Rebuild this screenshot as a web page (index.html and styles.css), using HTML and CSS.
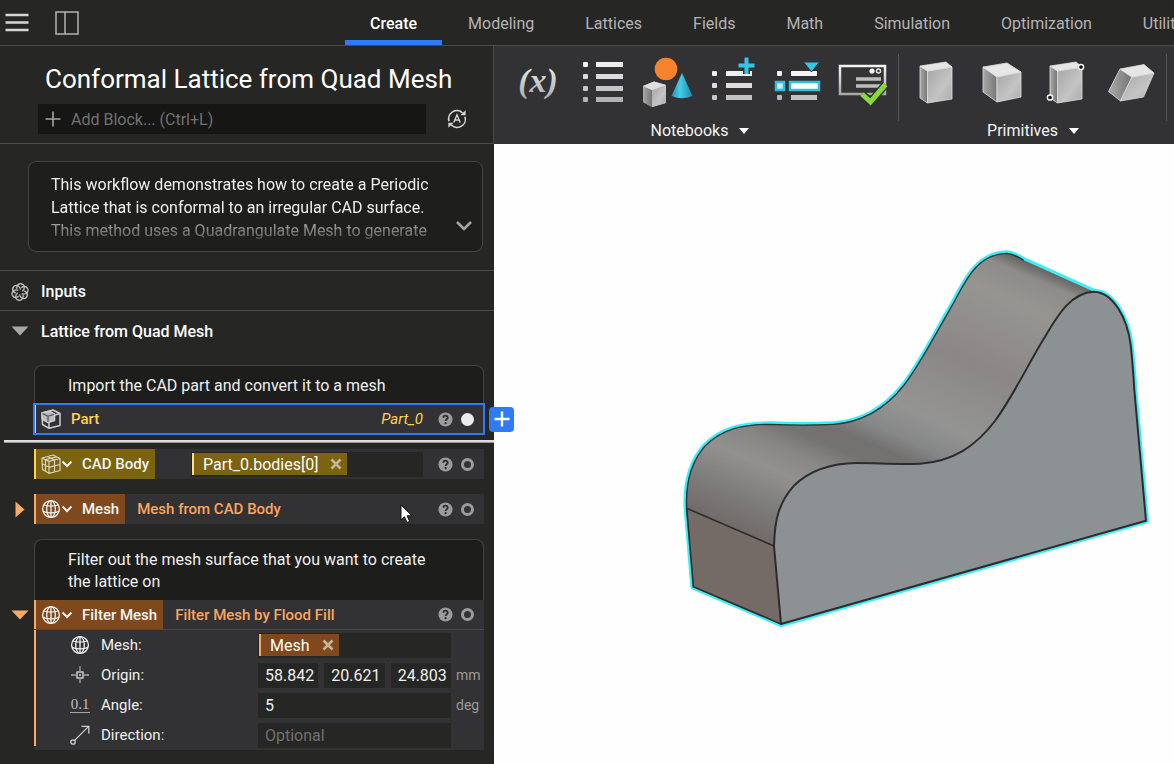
FILE: index.html
```html
<!DOCTYPE html>
<html lang="en">
<head>
    <meta charset="UTF-8">
    <meta name="viewport" content="width=device-width, initial-scale=1.0">
    <title>Conformal Lattice from Quad Mesh</title>
    <link rel="stylesheet" href="styles.css">
</head>
<body>
    <!-- shared icons and gradients -->
    <svg class="defs" width="0" height="0" aria-hidden="true">
        <defs>
            <linearGradient id="silver" x1="0" y1="0" x2="0" y2="1">
                <stop offset="0" stop-color="#f4f4f4"/>
                <stop offset="1" stop-color="#a8a8a8"/>
            </linearGradient>
            <linearGradient id="face" x1="0" y1="0" x2="1" y2="1">
                <stop offset="0" stop-color="#a6a6a6"/>
                <stop offset="0.6" stop-color="#c4c4c4"/>
                <stop offset="1" stop-color="#ababab"/>
            </linearGradient>
            <linearGradient id="side" x1="0" y1="0" x2="1" y2="0">
                <stop offset="0" stop-color="#a9a9a9"/>
                <stop offset="1" stop-color="#757575"/>
            </linearGradient>
            <linearGradient id="cone" x1="0" y1="0" x2="1" y2="0">
                <stop offset="0" stop-color="#1d93b4"/>
                <stop offset="0.4" stop-color="#43cfe8"/>
                <stop offset="1" stop-color="#1b87a5"/>
            </linearGradient>
        </defs>
        <symbol id="i-globe" viewBox="0 0 20 20">
            <g fill="none" stroke="currentColor" stroke-width="1.3">
                <circle cx="10" cy="10" r="8.4"/>
                <ellipse cx="10" cy="10" rx="4.3" ry="8.4"/>
                <path d="M10 1.6V18.4M2.8 6Q10 8.2 17.2 6M2 12.3Q10 15.6 18 12.3"/>
            </g>
        </symbol>
        <symbol id="i-chevron" viewBox="0 0 12 12">
            <path d="M1.500 3.500L6 8L10.500 3.500" fill="none" stroke="currentColor" stroke-width="2"/>
        </symbol>
        <symbol id="i-help" viewBox="0 0 16 16">
            <circle cx="8" cy="8" r="7.5" fill="#9b9b9b"/>
            <path d="M5.7 6.2C5.7 3.2 10.4 3.3 10.4 6C10.4 7.7 8.1 7.6 8.1 9.5" fill="none" stroke="#2b2b2c" stroke-width="1.9"/>
            <circle cx="8.1" cy="11.9" r="1.2" fill="#2b2b2c"/>
        </symbol>
        <symbol id="i-x" viewBox="0 0 12 12">
            <path d="M1.500 1.500L10.500 10.500M10.500 1.500L1.500 10.500" stroke="#c5b69a" stroke-width="2.6"/>
        </symbol>
    </svg>

    <header class="topbar">
        <button class="icon-btn" aria-label="Menu">
            <svg width="24" height="24" viewBox="0 0 24 24"><path d="M.5 4H23.5M.5 11.5H23.5M.5 19H23.5" stroke="#d6d6d6" stroke-width="2.4"/></svg>
        </button>
        <button class="icon-btn" aria-label="Toggle panel">
            <svg width="24" height="24" viewBox="0 0 24 24"><path d="M1 1H23V23H1ZM10 1V23" fill="none" stroke="#b4b4b4" stroke-width="1.5"/></svg>
        </button>
        <nav class="tabs">
            <a class="active" href="#create">Create</a>
            <a href="#modeling">Modeling</a>
            <a href="#lattices">Lattices</a>
            <a href="#fields">Fields</a>
            <a href="#math">Math</a>
            <a href="#simulation">Simulation</a>
            <a href="#optimization">Optimization</a>
            <a href="#utilities">Utilities</a>
        </nav>
    </header>

    <div class="workspace">
        <aside class="notebook">
            <div class="notebook-head">
                <h1>Conformal Lattice from Quad Mesh</h1>
                <div class="add-row">
                    <div class="add-block">
                        <svg width="16" height="16" viewBox="0 0 16 16"><path d="M8 .5V15.5M.5 8H15.5" stroke="#a5a5a5" stroke-width="1.6"/></svg>
                        <input type="text" aria-label="Add block" placeholder="Add Block... (Ctrl+L)">
                    </div>
                    <button class="icon-btn" aria-label="Auto rebuild">
                        <svg width="20" height="20" viewBox="0 0 20 20" fill="none" stroke="#d8d8d8" stroke-width="1.6">
                            <path d="M2 12.3A8.2 8.2 0 0 1 15.6 4M18 7.7A8.2 8.2 0 0 1 4.4 16"/>
                            <path d="M6.8 13.6L10 5.8L13.2 13.6M7.9 11H12.1" stroke-width="1.4"/>
                            <path d="M18.6 1.2V6.2H13.4ZM1.4 18.8V13.8H6.6Z" fill="#d8d8d8" stroke="none"/>
                        </svg>
                    </button>
                </div>
            </div>

            <div class="about">
                <p>This workflow demonstrates how to create a Periodic Lattice that is conformal to an irregular CAD surface. This method uses a Quadrangulate Mesh to generate</p>
                <button class="expand" aria-label="Show more">
                    <svg width="16" height="12" viewBox="0 0 16 12"><path d="M1 2L8 9L15 2" fill="none" stroke="#a3a3a3" stroke-width="2.6"/></svg>
                </button>
            </div>

            <h2 class="section lined">
                <svg width="18" height="20" viewBox="-10 -10 20 20" fill="none" stroke="#bdbdbd" stroke-width="1.5">
                    <path id="petal" d="M-3.500 -3.500C-4 -10.500 4.500 -11 4.800 -5C4.800 -3 3.500 -1.500 2.500 -.8"/>
                    <use href="#petal" transform="rotate(60)"/>
                    <use href="#petal" transform="rotate(120)"/>
                    <use href="#petal" transform="rotate(180)"/>
                    <use href="#petal" transform="rotate(240)"/>
                    <use href="#petal" transform="rotate(300)"/>
                </svg>
                Inputs
            </h2>
            <h2 class="section">
                <svg width="18" height="10" viewBox="0 0 18 10"><path d="M.5 .5H17.5L9 9.5Z" fill="#a8a8a8"/></svg>
                Lattice from Quad Mesh
            </h2>

            <div class="blocks">
                <p class="comment">Import the CAD part and convert it to a mesh</p>
                <div class="block selected">
                    <svg width="20" height="20" viewBox="0 0 20 20" fill="none" stroke="#cfcfcf" stroke-width="1.5" stroke-linejoin="round">
                        <path d="M1 4L12 1L19 4.5V16.5L8 19.3L1.5 15.5Z"/>
                        <path d="M8 19V14M14 6L19 4.5"/>
                        <path d="M1 4L8 2.100L13.500 4.800V11.500L7 13.500L1.200 10Z" fill="#b9b9b9"/>
                        <path d="M1.500 4.500L7 7.200L13.200 5.200M7 7.200V13" stroke="#4a4a4c" stroke-width="1.100"/>
                    </svg>
                    <span class="block-name">Part</span>
                    <em class="block-alias">Part_0</em>
                    <span class="tools">
                        <button aria-label="Help"><svg width="15" height="15"><use href="#i-help"/></svg></button>
                        <span class="dot full"></span>
                    </span>
                    <button class="add-after" aria-label="Add block after">
                        <svg width="16" height="16" viewBox="0 0 16 16"><path d="M8 .5V15.5M.5 8H15.5" stroke="#fff" stroke-width="2.4"/></svg>
                    </button>
                </div>
                <div class="insert-line"></div>

                <div class="block cad">
                    <button class="type">
                        <svg width="20" height="20" viewBox="0 0 20 20" fill="none" stroke="#d9d3bd" stroke-width="1.2" stroke-linejoin="round">
                            <path d="M1 4L12 1L19 4.5V16.5L8 19.3L1.5 15.5ZM1 4L8 7.4L19 4.5M8 7.4V19.3"/>
                            <path d="M6.5 2.5L13.5 6V18M4.5 5.7L15.6 2.8M4.5 5.7V17.3M1.2 9.8L8 13.3L19 10.5"/>
                        </svg>
                        <svg class="chev" width="12" height="12"><use href="#i-chevron"/></svg>
                        CAD Body
                    </button>
                    <div class="slot">
                        <span class="chip">Part_0.bodies[0] <button aria-label="Remove Part_0.bodies[0]"><svg width="12" height="12"><use href="#i-x"/></svg></button></span>
                    </div>
                    <span class="tools">
                        <button aria-label="Help"><svg width="15" height="15"><use href="#i-help"/></svg></button>
                        <span class="dot"></span>
                    </span>
                </div>

                <div class="block mesh">
                    <button class="fold" aria-label="Expand Mesh"><svg width="10" height="17" viewBox="0 0 10 17"><path d="M.5 .5V16.5L9.5 8.5Z" fill="#f9aa65"/></svg></button>
                    <button class="type">
                        <svg width="20" height="20"><use href="#i-globe"/></svg>
                        <svg class="chev" width="12" height="12"><use href="#i-chevron"/></svg>
                        Mesh
                    </button>
                    <span class="block-name">Mesh from CAD Body</span>
                    <span class="tools">
                        <button aria-label="Help"><svg width="15" height="15"><use href="#i-help"/></svg></button>
                        <span class="dot"></span>
                    </span>
                </div>

                <p class="comment">Filter out the mesh surface that you want to create the lattice on</p>
                <div class="block mesh open">
                    <button class="fold" aria-label="Collapse Filter Mesh"><svg width="18" height="10" viewBox="0 0 18 10"><path d="M.5 .5H17.5L9 9.5Z" fill="#f9aa65"/></svg></button>
                    <button class="type">
                        <svg width="20" height="20"><use href="#i-globe"/></svg>
                        <svg class="chev" width="12" height="12"><use href="#i-chevron"/></svg>
                        Filter Mesh
                    </button>
                    <span class="block-name">Filter Mesh by Flood Fill</span>
                    <span class="tools">
                        <button aria-label="Help"><svg width="15" height="15"><use href="#i-help"/></svg></button>
                        <span class="dot"></span>
                    </span>
                </div>
                <div class="params">
                    <div class="param mesh">
                        <span class="param-label">
                            <svg width="20" height="20"><use href="#i-globe"/></svg>
                            Mesh:
                        </span>
                        <div class="slot">
                            <span class="chip">Mesh <button aria-label="Remove Mesh"><svg width="12" height="12"><use href="#i-x"/></svg></button></span>
                        </div>
                    </div>
                    <div class="param">
                        <label class="param-label" for="originX">
                            <svg width="20" height="20" viewBox="0 0 20 20" fill="none" stroke="#a5a5a5" stroke-width="1.3"><path d="M1 10H6M14 10H19M10 1V6M10 14V18"/><rect x="7" y="7" width="6" height="6" stroke="#ddd"/><circle cx="10" cy="10" r=".6"/></svg>
                            Origin:
                        </label>
                        <div class="triple">
                            <input id="originX" type="text" value="58.842">
                            <input type="text" aria-label="Origin Y" value="20.621">
                            <input type="text" aria-label="Origin Z" value="24.803">
                        </div>
                        <span class="unit">mm</span>
                    </div>
                    <div class="param">
                        <label class="param-label" for="angle">
                            <span class="num-icon" aria-hidden="true">0.1</span>
                            Angle:
                        </label>
                        <input id="angle" type="text" value="5">
                        <span class="unit">deg</span>
                    </div>
                    <div class="param">
                        <label class="param-label" for="direction">
                            <svg width="20" height="20" viewBox="0 0 20 20" fill="none" stroke="#cfcfcf" stroke-width="1.3"><circle cx="3" cy="17" r="2.2"/><path d="M4.6 15.4L18.6 1.4M11.5 1.4H18.8V8.5"/></svg>
                            Direction:
                        </label>
                        <input id="direction" type="text" placeholder="Optional">
                    </div>
                </div>
            </div>
        </aside>

        <main class="stage">
            <div class="ribbon">
                <section class="group">
                    <div class="tools-row">
                        <button aria-label="Variable">
                            <svg width="52" height="52" viewBox="0 0 52 52"><text class="var-glyph" x="26" y="35" text-anchor="middle" fill="url(#silver)">(x)</text></svg>
                        </button>
                        <button aria-label="List">
                            <svg width="52" height="52" viewBox="0 0 52 52">
                                <rect x="6" y="5" width="5" height="5" rx="1" fill="#f0f0f0"/><rect x="19" y="5" width="27" height="5" fill="#ededed"/>
                                <rect x="6" y="17" width="5" height="5" rx="1" fill="#dadada"/><rect x="19" y="17" width="27" height="5" fill="#dadae0"/>
                                <rect x="6" y="29" width="5" height="5" rx="1" fill="#c6c6c6"/><rect x="19" y="29" width="27" height="5" fill="#c6c6c6"/>
                                <rect x="6" y="40" width="5" height="5" rx="1" fill="#b2b2b2"/><rect x="19" y="40" width="27" height="5" fill="#b2b2b2"/>
                            </svg>
                        </button>
                        <button aria-label="Shapes">
                            <svg width="52" height="52" viewBox="0 0 52 52">
                                <circle cx="24" cy="12" r="11.3" fill="#f8832c"/>
                                <path d="M40 16L29.5 39Q40 43.500 50.500 39Z" fill="url(#cone)"/>
                                <path d="M1 29L12 24.500L24 28V46L10 50L1 45Z" fill="#c8c8c8"/>
                                <path d="M1 29L10 33V50L1 45Z" fill="url(#side)"/>
                                <path d="M10 33L24 28V46L10 50Z" fill="url(#face)"/>
                                <path d="M1 29L12 24.500L24 28L10 33Z" fill="#dedede"/>
                            </svg>
                        </button>
                        <button aria-label="Add to list">
                            <svg width="52" height="52" viewBox="0 0 52 52">
                                <rect x="5" y="14" width="5" height="5" rx="1" fill="#f0f0f0"/><rect x="19" y="14" width="26" height="5" fill="#efefef"/>
                                <rect x="5" y="26" width="5" height="5" rx="1" fill="#dedede"/><rect x="19" y="26" width="26" height="5" fill="#e2dcdc"/>
                                <rect x="5" y="38" width="5" height="5" rx="1" fill="#c6c6c6"/><rect x="19" y="38" width="26" height="5" fill="#c2c2c2"/>
                                <path d="M39.500 .5V17M31.500 8.500H47.500" stroke="#323234" stroke-width="7"/>
                                <path d="M39.500 .5V17M31.500 8.500H47.500" stroke="#35c4e2" stroke-width="4"/>
                            </svg>
                        </button>
                        <button aria-label="Insert in list">
                            <svg width="52" height="52" viewBox="0 0 52 52">
                                <rect x="5" y="14" width="5" height="5" rx="1" fill="#f0f0f0"/><rect x="19" y="14" width="26" height="5" fill="#f4f4f4"/>
                                <rect x="4" y="25" width="8" height="8" fill="#d8e6ea" stroke="#2fc0de" stroke-width="2.500"/>
                                <rect x="18" y="25" width="29" height="8" fill="#fff" stroke="#2fc0de" stroke-width="2.500"/>
                                <rect x="5" y="38" width="5" height="5" rx="1" fill="#b8b8b8"/><rect x="19" y="38" width="26" height="5" fill="#c2c2c2"/>
                                <path d="M31.500 5H47.500L39.500 15Z" fill="#35c4e2" stroke="#323234"/>
                            </svg>
                        </button>
                        <button aria-label="Custom block">
                            <svg width="52" height="52" viewBox="0 0 52 52">
                                <path d="M3 9H48V37H3Z" fill="#343434" stroke="url(#silver)" stroke-width="2.500"/>
                                <circle cx="35" cy="14" r="2.600" fill="#fff"/><circle cx="41.500" cy="14" r="2" fill="none" stroke="#e5e5e5" stroke-width="1.500"/>
                                <path d="M19 22H44M19 29H44" stroke="#bdbdbd" stroke-width="3.500"/>
                                <path d="M25 37L33.500 45L48.500 27.500" fill="none" stroke="#323234" stroke-width="8"/>
                                <path d="M25 37L33.500 45L48.500 27.500" fill="none" stroke="#87d935" stroke-width="5"/>
                            </svg>
                        </button>
                    </div>
                    <button class="group-label">Notebooks <svg width="10" height="6" viewBox="0 0 10 6"><path d="M0 0H10L5 6Z" fill="#fff"/></svg></button>
                </section>

                <section class="group">
                    <div class="tools-row">
                        <button aria-label="Box">
                            <svg width="52" height="52" viewBox="0 0 52 52" stroke="#ddd" stroke-width=".8" stroke-linejoin="round">
                                <path d="M10 9L17.500 14V46L10 41Z" fill="url(#side)"/>
                                <path d="M17.500 14L42 10V42L17.500 46Z" fill="url(#face)"/>
                                <path d="M10 9L36 5L42 10L17.500 14Z" fill="#e6e6e6"/>
                            </svg>
                        </button>
                        <button aria-label="Cube">
                            <svg width="52" height="52" viewBox="0 0 52 52" stroke="#ddd" stroke-width=".8" stroke-linejoin="round">
                                <path d="M8 10L22 20V45L8 35Z" fill="url(#side)"/>
                                <path d="M22 20L46 15V40L22 45Z" fill="url(#face)"/>
                                <path d="M8 10L32 6L46 15L22 20Z" fill="#e6e6e6"/>
                            </svg>
                        </button>
                        <button aria-label="Box from corners">
                            <svg width="52" height="52" viewBox="0 0 52 52" stroke="#ddd" stroke-width=".8" stroke-linejoin="round">
                                <path d="M10 9L17.500 14V46L10 41Z" fill="url(#side)"/>
                                <path d="M17.500 14L42 10V42L17.500 46Z" fill="url(#face)"/>
                                <path d="M10 9L36 5L42 10L17.500 14Z" fill="#e6e6e6"/>
                                <circle cx="41" cy="10" r="2.600" fill="#111" stroke="#f5f5f5" stroke-width="1.500"/>
                                <circle cx="10" cy="40.500" r="2.600" fill="#111" stroke="#f5f5f5" stroke-width="1.500"/>
                            </svg>
                        </button>
                        <button aria-label="Parallelepiped">
                            <svg width="52" height="52" viewBox="0 0 52 52" stroke="#ddd" stroke-width=".8" stroke-linejoin="round">
                                <path d="M15 12L27 20L15.500 44L3.500 34.500Z" fill="url(#side)"/>
                                <path d="M27 20L49 16L38.500 40L15.500 44Z" fill="url(#face)"/>
                                <path d="M15 12L39 7.500L49 16L27 20Z" fill="#e6e6e6"/>
                            </svg>
                        </button>
                    </div>
                    <button class="group-label">Primitives <svg width="10" height="6" viewBox="0 0 10 6"><path d="M0 0H10L5 6Z" fill="#fff"/></svg></button>
                </section>
            </div>

            <div class="view">
                <svg viewBox="0 0 680 620" role="img" aria-label="Part preview">
                    <defs>
                        <linearGradient id="top" gradientUnits="userSpaceOnUse" x1="50" y1="805" x2="486" y2="-205">
                            <stop offset="0" stop-color="#706b69"/>
                            <stop offset="0.07" stop-color="#7a7877"/>
                            <stop offset="0.19" stop-color="#929190"/>
                            <stop offset="0.26" stop-color="#878685"/>
                            <stop offset="0.31" stop-color="#757371"/>
                            <stop offset="0.36" stop-color="#737170"/>
                            <stop offset="0.41" stop-color="#868788"/>
                            <stop offset="0.49" stop-color="#949493"/>
                            <stop offset="0.67" stop-color="#8b8787"/>
                            <stop offset="0.87" stop-color="#969592"/>
                            <stop offset="0.95" stop-color="#8e8c8a"/>
                            <stop offset="0.99" stop-color="#605e5c"/>
                        </linearGradient>
                    </defs>
                    <!-- model drawn at 3x -->
                    <g transform="translate(176 96) scale(.33333)" stroke-linejoin="round" stroke-linecap="round">
                        <path d="M50 805C46 730 60 670 105 618C155 568 215 553 300 553C370 556 430 556 490 553C580 547 650 500 700 438C750 375 800 275 850 190C885 125 920 42 1010 40C1035 42 1045 52 1060 60L1272 155C1330 157 1372 235 1382 315C1386 350 1390 400 1393 450L1428 842L333 1152L70 1040Z" fill="none" stroke="#3deef8" stroke-width="18"/>
                        <path d="M50 805C46 730 60 670 105 618C155 568 215 553 300 553C370 556 430 556 490 553C580 547 650 500 700 438C750 375 800 275 850 190C885 125 920 42 1010 40C1035 42 1045 52 1060 60L1272 155L1250 700L312 918Z" fill="url(#top)"/>
                        <path d="M50 805L312 918L333 1152L70 1040Z" fill="#746b67"/>
                        <path d="M333 1152L312 918C314 840 325 790 372 737C420 690 480 670 560 669C620 669 690 674 750 671C850 664 915 620 975 543C1035 460 1075 370 1125 290C1165 222 1205 157 1272 155C1330 157 1372 235 1382 315C1386 350 1390 400 1393 450L1428 842Z" fill="#8c9194" stroke="#2c2c2c" stroke-width="6"/>
                        <path d="M312 918L50 805L70 1040L333 1152" fill="none" stroke="#2f2b29" stroke-width="5"/>
                        <path d="M50 805C46 730 60 670 105 618C155 568 215 553 300 553C370 556 430 556 490 553C580 547 650 500 700 438C750 375 800 275 850 190C885 125 920 42 1010 40C1035 42 1045 52 1060 60" fill="none" stroke="#1f3436" stroke-width="4"/>
                    </g>
                </svg>
            </div>
        </main>
    </div>

    <svg class="pointer" width="13" height="20" viewBox="0 0 13 20"><path d="M1 1V16L4.500 12.800L7 18.500L9.600 17.400L7.100 11.800H12Z" fill="#fff" stroke="#111" stroke-width="1"/></svg>
</body>
</html>
```
FILE: styles.css
```css
* {
    box-sizing: border-box;
}
body {
    margin: 0;
    height: 100vh;
    display: flex;
    flex-direction: column;
    overflow: hidden;
    position: relative;
    background-color: #262625;
    color: #f0f0f0;
    font-family: Roboto, "Liberation Sans", sans-serif;
    font-size: 16px;
}
button, input {
    font: inherit;
    color: inherit;
    background: none;
    border: none;
    padding: 0;
    margin: 0;
}
button {
    cursor: pointer;
}
input {
    min-width: 0;
    outline: none;
}
input::placeholder {
    color: #717171;
    opacity: 1;
}
svg {
    display: block;
    flex-shrink: 0;
}
.defs {
    position: absolute;
}

/* top bar */
.topbar {
    display: flex;
    align-items: center;
    height: 46px;
    flex-shrink: 0;
    padding-left: 5px;
    gap: 26px;
    border-bottom: 1px solid #4a4a4a;
}
.tabs {
    display: flex;
    align-self: stretch;
    gap: 1px;
    margin-left: 240px;
}
.tabs a {
    display: flex;
    align-items: center;
    padding: 6px 25px 0;
    border-bottom: 5px solid transparent;
    color: #b4b4b4;
    text-decoration: none;
    white-space: nowrap;
}
.tabs .active {
    color: #fff;
    font-weight: 500;
    border-bottom-color: #2f7af5;
}

.workspace {
    display: flex;
    flex: 1;
    min-height: 0;
}

/* notebook panel */
.notebook {
    flex: 0 0 494px;
}
.notebook-head {
    padding: 16px 26px 9px 38px;
    border-right: 1px solid #4a4a4a;
    border-bottom: 1px solid #4a4a4a;
}
h1 {
    margin: 0 0 8px 7px;
    font-size: 26px;
    font-weight: 400;
    line-height: 34px;
    white-space: nowrap;
    color: #fff;
}
.add-row {
    display: flex;
    align-items: center;
    gap: 21px;
}
.add-block {
    display: flex;
    align-items: center;
    flex: 1;
    gap: 10px;
    height: 30px;
    padding-left: 7px;
    background-color: #161615;
}
.add-block input {
    flex: 1;
}
.about {
    position: relative;
    margin: 17px 11px 18px 28px;
    padding: 11px 40px 9px 22px;
    border: 1px solid #454545;
    border-radius: 8px;
    background-color: #1e1e1d;
}
.about p {
    margin: 0;
    line-height: 23px;
    -webkit-mask-image: linear-gradient(#000 62%, rgba(0, 0, 0, 0.65) 72%, rgba(0, 0, 0, 0.3) 95%);
    mask-image: linear-gradient(#000 62%, rgba(0, 0, 0, 0.65) 72%, rgba(0, 0, 0, 0.3) 95%);
}
.expand {
    position: absolute;
    right: 10px;
    bottom: 19px;
}
.section {
    display: flex;
    align-items: center;
    gap: 12px;
    height: 40px;
    margin: 0;
    padding-left: 11px;
    font-size: 16px;
    font-weight: 500;
    color: #fff;
}
.section.lined {
    height: 41px;
    padding-top: 2px;
    border-top: 1px solid #4a4a4a;
    border-bottom: 1px solid #4a4a4a;
}

/* blocks */
.blocks {
    padding: 14px 10px 0 34px;
}
.comment {
    margin: 0;
    padding: 9px 32px 7px 33px;
    border: 1px solid #424242;
    border-bottom: none;
    border-radius: 8px 8px 0 0;
    background-color: #1d1d1c;
    line-height: 22px;
}
.block {
    display: flex;
    align-items: center;
    position: relative;
    height: 30px;
    margin-bottom: 15px;
    padding-right: 10px;
    background-color: #323234;
    font-size: 15px;
}
.selected {
    margin-bottom: 6px;
    padding-left: 5px;
    border-left: 2px solid #ffd9a0;
    outline: 2px solid #2f7af5;
    outline-offset: -1px;
}
.block-name {
    flex: 1;
    margin-left: 12px;
    font-weight: 500;
    color: #f9a560;
}
.selected .block-name {
    margin-left: 10px;
    color: #ffd34e;
}
.block-alias {
    margin-right: 15px;
    color: #ffd34e;
}
.add-after {
    position: absolute;
    right: -30px;
    display: flex;
    align-items: center;
    justify-content: center;
    width: 25px;
    height: 25px;
    border-radius: 4px;
    background-color: #2f7af5;
}
.insert-line {
    height: 3px;
    margin: 0 -10px 6px -30px;
    background-color: #e0dce0;
    border-bottom: 1px solid #9a969a;
}
.type {
    display: flex;
    align-items: center;
    align-self: stretch;
    padding: 0 6px 0 5px;
    color: #f4f4f4;
    font-weight: 500;
    white-space: nowrap;
}
.chev {
    margin: 0 9px 0 0;
}
.cad .type {
    border-left: 2px solid #ffd34e;
    background-color: #7c630f;
}
.mesh .type {
    border-left: 2px solid #f9aa65;
    background-color: #7f491d;
}
.fold {
    position: absolute;
    left: -23px;
    width: 18px;
    display: flex;
    justify-content: center;
}
.tools {
    display: flex;
    align-items: center;
    gap: 8px;
    margin-left: auto;
}
.dot {
    width: 13px;
    height: 13px;
    border: 3px solid #9b9b9b;
    border-radius: 50%;
}
.dot.full {
    border-color: #ebebeb;
    background-color: #ebebeb;
}
.slot {
    display: flex;
    align-items: center;
    flex: 1;
    height: 25px;
    padding-left: 1px;
    background-color: #262625;
}
.block .slot {
    margin: 0 15px 0 36px;
}
.chip {
    display: flex;
    align-items: center;
    gap: 12px;
    height: 22px;
    padding: 0 5px 0 9px;
    border-left: 2px solid #ffdf8a;
    background-color: #7c630f;
    color: #fff;
    font-size: 16px;
}
.mesh .chip {
    border-left-color: #f9aa65;
    background-color: #7f491d;
}

/* parameters of the open block */
.open {
    margin-bottom: 0;
    border-bottom: 1px solid #48484a;
}
.params {
    background: linear-gradient(#f9aa65, #f9aa65) 0 0 / 2px calc(100% - 4px) no-repeat #323234;
    padding-right: 5px;
}
.param {
    display: grid;
    grid-template-columns: 224px 1fr 28px;
    align-items: center;
    height: 30px;
}
.param-label {
    display: flex;
    align-items: center;
    gap: 11px;
    padding-left: 36px;
    font-size: 15px;
}
.param input {
    width: 100%;
    height: 25px;
    padding-left: 7px;
    background-color: #262625;
}
.triple {
    display: flex;
    gap: 6px;
}
.unit {
    padding-left: 5px;
    font-size: 14px;
    color: #9a9a9a;
}
.num-icon {
    width: 20px;
    border-bottom: 1px solid #a5a5a5;
    font-family: "Liberation Serif", serif;
    line-height: 15px;
    text-align: center;
    color: #c0c0c0;
}

/* ribbon */
.stage {
    display: flex;
    flex-direction: column;
    flex: 1;
    min-width: 0;
}
.ribbon {
    display: flex;
    height: 98px;
    padding: 8px 0 0 7px;
    overflow: hidden;
    background-color: #323234;
}
.group {
    position: relative;
    padding: 3px 4px 0;
    flex-shrink: 0;
}
.group::after {
    content: "";
    position: absolute;
    top: 0;
    right: 0;
    width: 1px;
    height: 67px;
    background-color: #555;
}
.tools-row {
    display: flex;
}
.tools-row button {
    display: flex;
    justify-content: center;
    width: 65px;
}
.group-label {
    display: flex;
    align-items: center;
    justify-content: center;
    gap: 11px;
    width: 100%;
    margin-top: 12px;
    color: #f4f4f4;
}
.var-glyph {
    font-family: "Liberation Serif", serif;
    font-size: 34px;
    font-style: italic;
    font-weight: 700;
}
.view {
    flex: 1;
    min-height: 0;
    background-color: #fefefe;
}
.view svg {
    width: 100%;
    height: 100%;
}
.pointer {
    position: absolute;
    left: 400px;
    top: 504px;
}
```
